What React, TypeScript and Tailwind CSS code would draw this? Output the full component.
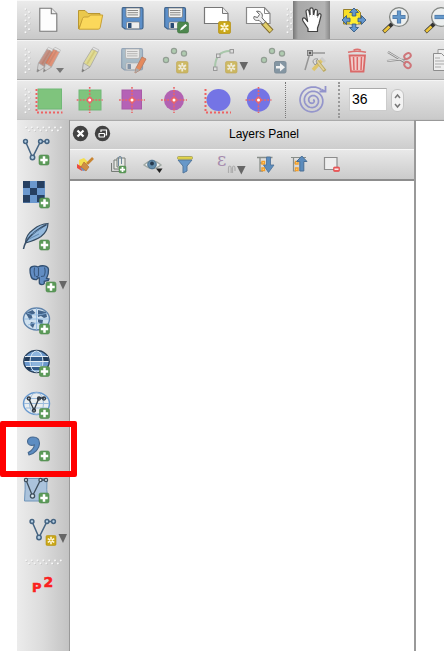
import React from "react";

type TileProps = { x: number; y: number; w: number; h: number; children?: React.ReactNode; className?: string };

/* One icon cell; its drawing uses the coordinates of the toolbar canvas. */
function Tile({ x, y, w, h, children, className = "" }: TileProps) {
  return (
    <svg width={w} height={h} viewBox={`${x} ${y} ${w} ${h}`} className={`block flex-none ${className}`}>
      {children}
    </svg>
  );
}

function Grip({ x, y, w, h, vertical = true }: { x: number; y: number; w: number; h: number; vertical?: boolean }) {
  const n = vertical ? 9 : 13;
  return (
    <Tile x={x} y={y} w={w} h={h}>
      {Array.from({ length: n }, (_, i) => {
        const cx = vertical ? x + (i % 2 ? 12 : 8.5) : x + 9 + i * 2.9;
        const cy = vertical ? y + 8 + i * 2.9 : y + h / 2 + (i % 2 ? 1.5 : -1.5);
        return (
          <g key={i}>
            <circle cx={cx + 0.5} cy={cy + 0.6} r="1" fill="#bdbdbd" />
            <circle cx={cx} cy={cy} r="1" fill="#f8f8f8" />
          </g>
        );
      })}
    </Tile>
  );
}

function Plus({ x, y }: { x: number; y: number }) {
  return (
    <g>
      <rect x={x} y={y} width="10" height="10" rx="1.8" fill="#5b9a58" stroke="#4f874e" strokeWidth=".6" />
      <path d={`M${x + 5} ${y + 1.3}v7.4M${x + 1.3} ${y + 5}h7.4`} stroke="#fff" strokeWidth="2.5" />
    </g>
  );
}

function Star({ x, y, s = 12, o = 1 }: { x: number; y: number; s?: number; o?: number }) {
  return (
    <g opacity={o} transform={`translate(${x} ${y}) scale(${s / 12})`}>
      <rect width="12" height="12" rx="1.6" fill="#c9a718" stroke="#b58f11" strokeWidth=".7" />
      <path d="M6 1.500V10.500M2.100 3.750L9.900 8.250M2.100 8.250L9.900 3.750" stroke="#fff9dd" strokeWidth="1.900" />
      <circle cx="6" cy="6" r="1.100" fill="#d5ae27" />
    </g>
  );
}

function Floppy({ x, faded = false }: { x: number; faded?: boolean }) {
  return (
    <g transform={`translate(${x} ${faded ? 48 : 7})`} opacity={faded ? 0.48 : 1}>
      <path d="M1.5.7h18.5q1.5 0 1.5 1.5v18q0 1.8-1.8 1.8H3.5L.7 19.8V2Q.7.7 1.5.7z" fill={faded ? "#749bb4" : "#5c8fc9"} stroke="#42658c" strokeWidth="1.2" />
      <path d="M4.5 1h14v8q0 1.5-1.5 1.5H6Q4.5 10.500 4.500 9z" fill="#f1f1ef" stroke="#777" strokeWidth=".7" />
      <path d="M6 3.500h10.500M6 5.700h10.500M6 7.900h10.500" stroke="#71706d" strokeWidth=".8" />
      <rect x="5" y="15" width="13" height="6.700" rx="1" fill="#eee" stroke="#777" strokeWidth=".6" />
      <rect x="6.500" y="16" width="3.500" height="5" rx=".5" fill="#294b74" />
    </g>
  );
}

function Pencil({ x, y, color, edge, o = 0.65 }: { x: number; y: number; color: string; edge: string; o?: number }) {
  return (
    <g transform={`translate(${x} ${y})`} opacity={o}>
      <path d="M2.500 16L11 2 17 5 9 20 1 25z" fill={color} stroke="#929292" strokeWidth=".7" />
      <path d="M11 2l1.500-1.800L18 3l-1 2z" fill="#e8e8e8" stroke="#999" strokeWidth=".6" />
      <path d="M6 17l8-13.500" stroke={edge} strokeWidth="1.800" />
      <path d="M2.500 16l6.500 4-8 5z" fill="#d2d2d2" stroke="#888" strokeWidth=".6" />
      <path d="M1.500 22l2 1.300L1 25z" fill="#555" />
    </g>
  );
}

function Down({ x, y }: { x: number; y: number }) {
  return <path d={`M${x} ${y}h8.600l-4.300 8.600z`} fill="#666" />;
}

function Cross({ x, y, r = 13 }: { x: number; y: number; r?: number }) {
  return (
    <g fill="none" stroke="#ea6467" strokeWidth="1.600">
      <path strokeDasharray="1.8 1.3" d={`M${x - r} ${y}h${r * 2}M${x} ${y - r}v${r * 2}`} />
      <circle cx={x} cy={y} r="2.200" fill="#fff" strokeWidth="1.400" />
    </g>
  );
}

const redCorner = { fill: "none", stroke: "#ed6263", strokeWidth: 2, strokeDasharray: "2 2" };

function Nodes({ x }: { x: number }) {
  return (
    <g fill="#afcbb0" stroke="#939e94" strokeWidth="1.2">
      <circle cx={x} cy="60" r="2.600" /><circle cx={x + 8} cy="51" r="2.600" /><circle cx={x + 18} cy="53.500" r="2.600" />
    </g>
  );
}

function VLine({ x, y }: { x: number; y: number }) {
  return (
    <g fill="#b9d1e5" stroke="#456482" strokeWidth="1.500">
      <path fill="none" d={`M${x} ${y}l7 16 8-16h7`} />
      <circle cx={x} cy={y} r="1.900" /><circle cx={x + 7} cy={y + 16} r="2.200" />
      <circle cx={x + 15} cy={y} r="1.900" /><circle cx={x + 21.500} cy={y} r="1.900" />
    </g>
  );
}

function Magnifier({ x, minus = false }: { x: number; minus?: boolean }) {
  return (
    <g>
      <path d={`M${x - 6.500} 23.500l-9 8.500`} stroke="#333" strokeWidth="3.800" />
      <path d={`M${x - 9.500} 26.500l-5.500 5.200`} stroke="#edc53b" strokeWidth="2.700" />
      <circle cx={x} cy="17" r="9.400" fill="#ecefef" stroke="#818481" strokeWidth="1.300" />
      <path d={minus ? `M${x - 6.500} 17h13` : `M${x - 6.500} 17h13M${x} 10.500v13`} stroke="#4b76a5" strokeWidth="4.200" />
      <path d={minus ? `M${x - 5.800} 17h11.600` : `M${x - 5.800} 17h11.600M${x} 11.200v11.600`} stroke="#6499cb" strokeWidth="2.700" />
    </g>
  );
}

/* Archimedean spiral of three turns that ends at the arrow on its upper right. */
const spiralEnd = Math.PI * 1.72;
const spiralPoints = Array.from({ length: 121 }, (_, i) => {
  const t = i / 120;
  const a = spiralEnd - (1 - t) * Math.PI * 6;
  const r = 1 + t * 13;
  return `${(312.5 + r * Math.cos(a)).toFixed(1)},${(100.5 + r * Math.sin(a)).toFixed(1)}`;
}).join(" ");

function TopBar() {
  return (
    <div className="ml-[17px] flex h-10 flex-none overflow-hidden border-b border-t border-b-[#aaa] border-t-[#f8f8f8] bg-gradient-to-b from-[#ebebeb] to-[#c9c9c9]">
      <Grip x={17} y={1} w={16} h={38} />
      <Tile x={33} y={1} w={36} h={38}>
        <path d="M39.800 8.300h11.500l5.500 5.500v17.500h-17z" fill="#fdfdfd" stroke="#777" strokeWidth="1.100" />
        <path d="M51.300 8.300v5.500h5.500" fill="#eee" stroke="#777" strokeWidth="1.100" />
      </Tile>
      <Tile x={69} y={1} w={42} h={38}>
        <path d="M78.500 29V10.500h6.500l3 3h12v4H84z" fill="#eac84c" stroke="#b99731" strokeWidth="1" />
        <path d="M82.500 18.500q.5-1.500 2-1.500h4l2-2h12.200l-2.500 12.500q-.4 1.700-2 1.700H79z" fill="#fbd85b" stroke="#c7a036" strokeWidth="1" />
      </Tile>
      <Tile x={111} y={1} w={42} h={38}><Floppy x={121.500} /></Tile>
      <Tile x={153} y={1} w={42} h={38}>
        <Floppy x={164} />
        <rect x="177.500" y="22" width="11" height="11" rx="1.800" fill="#4d874e" stroke="#3d703e" strokeWidth=".6" />
        <path d="M180 30.500l1-2.500 4.500-4 1.500 1.500-4.500 4z" fill="#fff" />
      </Tile>
      <Tile x={195} y={1} w={42} h={38}>
        <path d="M204.500 7.500h18l5.500 6v10h-23.500z" fill="#fff" stroke="#777" strokeWidth="1.200" />
        <path d="M222.500 7.500v6h5.500" fill="#eee" stroke="#777" /><Star x={218.500} y={21.500} s={12} />
      </Tile>
      <Tile x={237} y={1} w={42} h={38}>
        <path d="M246.500 7.500h18l5.500 6v10h-23.500z" fill="#fff" stroke="#888" strokeWidth="1.200" />
        <path d="M264.500 7.500v6h5.500" fill="none" stroke="#888" />
        <path d="M263 22.500l8.500 9" stroke="#806b2c" strokeWidth="5.500" />
        <path d="M264 23.500l7 7.500" stroke="#e1ce69" strokeWidth="3.500" />
        <path d="M254 16.500l3.500 1 2-3-3-3.200c4-.8 7 2.700 5.500 6.500l3.500 4-2.500 2.500-4-4c-4 .8-6-1.200-5-3.800z" fill="#eee" stroke="#666" />
      </Tile>
      <Grip x={280} y={1} w={14} h={38} />
      <Tile x={293} y={1} w={37} h={38} className="bg-[linear-gradient(to_right,#777,#a8a8a8_14%,#b4b4b4_85%,#888)]">
        <path d="M308 31.500v-3l-5-7.500c-1.400-3 1.200-4.200 2.800-1.800l1.800 2.300-1.600-10c-.2-2.100 2.600-2.400 3-.4l1.200 5.400-.3-7c0-2.200 3-2.300 3.200 0l.4 6.700 1-5.500c.5-1.900 3-1.500 2.900.5l-.3 6.300 1.300-3c1-1.700 3-.6 2.600 1.200l-2 8-1.500 4.300v3.500z" fill="#fff" stroke="#3f3f3f" strokeWidth="1.200" strokeLinejoin="round" />
        <path d="M310.300 15l.3 3.500M313.600 15v3.500M316.800 16l-.2 3" stroke="#fff" strokeWidth="1.500" />
      </Tile>
      <Tile x={330} y={1} w={45} h={38}>
        <path d="M343.500 9.500h14l3 3v11.500h-17z" fill="#f8df27" stroke="#967f2c" />
        <path d="M350 16h8v8h-8z" fill="#ffed32" />
        <g fill="#6396ce" stroke="#395d83" strokeWidth=".9" strokeLinejoin="round">
          <path d="M354 8l4.500 4.500h-2.700V16h-3.600v-3.500h-2.700z" /><path d="M354 32l4.500-4.500h-2.700V24h-3.600v3.500h-2.700z" />
          <path d="M342 20l4.500-4.500v2.700h3.500v3.600h-3.500v2.700z" /><path d="M366 20l-4.500-4.500v2.700H358v3.600h3.500v2.700z" />
        </g>
      </Tile>
      <Tile x={375} y={1} w={42} h={38}><Magnifier x={399} /></Tile>
      <Tile x={417} y={1} w={27} h={38}><Magnifier x={441} minus /></Tile>
    </div>
  );
}

function EditBar() {
  return (
    <div className="ml-[17px] flex h-10 flex-none overflow-hidden border-b border-t border-b-[#aaa] border-t-[#f5f5f5] bg-gradient-to-b from-[#e9e9e9] to-[#cacaca]">
      <Grip x={17} y={41} w={16} h={38} />
      <Tile x={33} y={41} w={36} h={38}>
        <Pencil x={36} y={47} color="#b96b58" edge="#ad583f" /><Pencil x={42.500} y={47} color="#e66c43" edge="#c75c38" />
        <path d="M56 68h8l-4 5z" fill="#777" />
      </Tile>
      <Tile x={69} y={41} w={42} h={38}><Pencil x={81} y={47} color="#e2dc87" edge="#d1c664" o={0.8} /></Tile>
      <Tile x={111} y={41} w={42} h={38}>
        <Floppy x={121} faded />
        <path d="M136 68l6-11 4 2-6 11-5 3z" fill="#e58a5d" stroke="#ba8067" /><path d="M136 68l4 2-5 3z" fill="#aaa" />
      </Tile>
      <Tile x={153} y={41} w={44} h={38}><Nodes x={166} /><Star x={176.500} y={61.500} s={11.500} o={0.6} /></Tile>
      <Tile x={197} y={41} w={56} h={38}>
        <path d="M215 68q0-17 15-17h2" fill="none" stroke="#a9c7ab" strokeWidth="2" />
        <g fill="#ddd" stroke="#999"><rect x="213.500" y="67" width="3.500" height="3.500" /><rect x="216.500" y="54" width="3.500" height="3.500" /><rect x="230" y="49.500" width="3.500" height="3.500" /></g>
        <Star x={225.500} y={61.500} s={11.500} o={0.6} /><Down x={239.500} y={62} />
      </Tile>
      <Tile x={253} y={41} w={43} h={38}>
        <Nodes x={264} /><rect x="274.500" y="61.500" width="11.500" height="11.500" rx="1.500" fill="#8496a3" stroke="#7f8e99" />
        <path d="M276 66h4v-3l5 4.300-5 4.300v-3h-4z" fill="#f2f2f2" />
      </Tile>
      <Tile x={296} y={41} w={37} h={38}>
        <path d="M305 70l5-17h15" fill="none" stroke="#969696" strokeWidth="1.500" />
        <rect x="307.500" y="50.500" width="5" height="5" fill="#bbb" stroke="#818181" /><circle cx="310" cy="53" r="1.200" fill="#555" />
        <path d="M322 60l-9 10" stroke="#dec56c" strokeWidth="3.500" /><path d="M317 61l8 10" stroke="#baa85c" strokeWidth="3.500" />
        <path d="M317 61l7 9" stroke="#dfd09b" strokeWidth="2" /><path d="M313 62q0-4 5-3l-2 2 1 2-2 2z" fill="#ddd" stroke="#999" /><path d="M321 58l4 4" stroke="#ccc" strokeWidth="3" />
      </Tile>
      <Tile x={333} y={41} w={42} h={38}>
        <path d="M349.500 55.500h15.500l-1.500 16h-12.500z" fill="#f1cecc" stroke="#da6968" strokeWidth="1.800" />
        <path d="M353.500 57l.5 13M357.300 57v13M361.500 57l-.5 13" stroke="#d66" strokeWidth="1.500" />
        <path d="M348 52.300q9-2.300 18 0M353.500 50.200q3.700-2 7.400 0" stroke="#dc7270" strokeWidth="1.500" fill="none" />
      </Tile>
      <Tile x={375} y={41} w={49} h={38}>
        <path d="M388 52l18 11M387 61l19-2" stroke="#888" strokeWidth="2.200" /><path d="M388 52l17 10M387 61l18-2.500" stroke="#e5e5e5" strokeWidth=".9" />
        <g fill="none" stroke="#cf7579" strokeWidth="1.900"><ellipse cx="407.500" cy="56" rx="3.500" ry="2.500" transform="rotate(-30 407.500 56)" /><ellipse cx="407.500" cy="65" rx="3.500" ry="2.700" transform="rotate(38 407.500 65)" /></g>
      </Tile>
      <Tile x={424} y={41} w={20} h={38}>
        <path d="M438 53v-3.500h12V67" fill="#eee" stroke="#999" /><path d="M433.500 53.500h8l5 5v12h-13z" fill="#eee" stroke="#8d8d8d" />
        <path d="M435 58h5M435 61h10M435 64h10M435 67h6" stroke="#aaa" />
      </Tile>
    </div>
  );
}

function ShapeBar() {
  return (
    <div className="ml-[17px] flex h-10 flex-none border-b border-t border-b-[#c4c4c4] border-t-[#f5f5f5] bg-gradient-to-b from-[#eaeaea] to-[#cacaca]">
      <Grip x={17} y={81} w={16} h={38} />
      <Tile x={33} y={81} w={36} h={38}><rect x="38" y="89" width="23.500" height="20" fill="#7fc47d" stroke="#71b877" /><path d="M36.500 89v23.500h26" {...redCorner} /></Tile>
      <Tile x={69} y={81} w={42} h={38}><rect x="79" y="90" width="22" height="20" fill="#7fc47d" stroke="#71b877" /><Cross x={89.700} y={100} /></Tile>
      <Tile x={111} y={81} w={42} h={38}><rect x="122" y="90" width="19.500" height="19" fill="#b562b6" stroke="#a85aa8" /><Cross x={132} y={100} /></Tile>
      <Tile x={153} y={81} w={44} h={38}><ellipse cx="174" cy="100" rx="10" ry="10.300" fill="#b262b2" /><Cross x={174} y={100} /></Tile>
      <Tile x={197} y={81} w={43} h={38}><ellipse cx="218.500" cy="100" rx="12" ry="11" fill="#7474e5" /><path d="M205.500 89v23.500H231" {...redCorner} /></Tile>
      <Tile x={240} y={81} w={45} h={38}><circle cx="258.500" cy="100" r="11.700" fill="#7474e5" /><Cross x={258.500} y={100} /></Tile>
      <div className="mt-px h-9 border-l border-dotted border-[#777]" />
      <Tile x={286} y={81} w={51} h={38}>
        <polyline points={spiralPoints} fill="none" stroke="#9495cb" strokeWidth="1.700" />
        <path d="M319.500 91.500h6v-5.500M321.500 89.500l4 2" fill="none" stroke="#9293cb" strokeWidth="1.800" />
      </Tile>
      <div className="mt-px mr-[9px] ml-px h-9 border-l-2 border-dotted border-[#999]" />
      <div className="mt-[7px] flex h-[23px] w-[38px] items-center border border-[#ccc] border-t-[#aaa] bg-white pl-0.5 font-['Liberation_Sans',sans-serif] text-[14px] text-black">36</div>
      <div className="mt-2 ml-1 h-[23px] w-[13px] rounded-[6px] border border-[#c4c4c4] bg-[#f3f3f3]">
        <Tile x={391} y={89} w={11} h={21}><path d="M394 97l2.500-3 2.500 3M394 103l2.500 3 2.500-3" fill="none" stroke="#777" strokeWidth="1.500" /></Tile>
      </div>
    </div>
  );
}

function SideBar() {
  const tile = { x: 17, w: 52 };
  return (
    <aside className="flex w-[53px] flex-none flex-col border-r border-[#999] bg-gradient-to-r from-[#ececec] via-[#dbdbdb] to-[#c3c3c3]">
      <Grip x={17} y={120} w={52} h={18} vertical={false} />
      <Tile {...tile} y={138} h={36}><VLine x={25.500} y={141.500} /><Plus x={39} y={155} /></Tile>
      <Tile {...tile} y={174} h={42}>
        <rect x="23" y="181" width="22" height="22" fill="#6b98ce" /><path d="M23 181h7v7h-7zM37 181h7.500v7H37zM30 188h7v7h-7zM23 195h7v7.500h-7zM37 195h7.500v7H37z" fill="#263f61" /><Plus x={39.500} y={198} />
      </Tile>
      <Tile {...tile} y={216} h={42}>
        <path d="M25.500 243q0-8 8.500-14 6-5 14-5.500-.2 8-7 13-5 3.500-15.500 6.500z" fill="#94b9dd" stroke="#354b61" strokeWidth="1.200" />
        <path d="M23.500 249q2-13 23-24.500" fill="none" stroke="#384f68" strokeWidth="1.500" /><path d="M29 239l10-5M32 234l10-6" stroke="#6289b1" fill="none" /><Plus x={39.500} y={240} />
      </Tile>
      <Tile {...tile} y={258} h={43}>
        <path d="M30 269.500c0-3.500 5-4.200 8-2.500 3.500-2 10-1.800 10.500 2.500.3 4-1 7-2 9l2.500.5-.7 1.500-4 .8v1.700c0 2.200-5 2.200-5-.5V278h-1.500l-1 1.500c-4 .5-5.500-1.500-6-4-.8-2-.8-4-.8-6z" fill="#628dc3" stroke="#314f71" strokeWidth="1.300" />
        <path d="M34.500 267.500q-1 5 .5 9M38.500 268v7.500q-1 1.500-2.500 1M44.500 267.500q1.500 5-.5 8.500l-3 .5" fill="none" stroke="#38587e" strokeWidth="1.100" />
        <Plus x={46} y={282} /><path d="M59 281h8l-4 8.500z" fill="#666" />
      </Tile>
      <Tile {...tile} y={301} h={42}>
        <ellipse cx="36.500" cy="319" rx="13" ry="11" fill="#d0e1ef" stroke="#6285ac" strokeWidth="1.400" />
        <path d="M25.500 313l7-3 3 3-4 2 1 3-3 2-2-4zM31 322l4 1-2 5-3-3zM38 310l8 2 1 5-3 1-3-2-3 1zM38 319l5 1-1 6-4-4z" fill="#44658b" />
        <path d="M24 319h25M36.500 308v22M27 313q9 4 20 0M28 325q9-4 18 0" fill="none" stroke="#8eb7df" strokeWidth=".8" /><Plus x={39.500} y={324} />
      </Tile>
      <Tile {...tile} y={343} h={42}>
        <ellipse cx="36.500" cy="361.500" rx="12.700" ry="11" fill="#6b98cd" />
        <path d="M26 356h21l2 5H24zM25 366h23l-3 4H28z" fill="#203a58" />
        <path d="M31.500 351h10v21h-10z" fill="#8db4dd" /><path d="M30 356.500h13v5H30zM30.500 366.500h12v3.500h-12z" fill="#345b89" />
        <ellipse cx="36.500" cy="361.500" rx="12.700" ry="11" fill="none" stroke="#29415d" strokeWidth="1.400" />
        <ellipse cx="36.500" cy="361.500" rx="6.500" ry="10.500" fill="none" stroke="#d5e6f3" /><path d="M25 356.500h23M24.500 361.500h24M26 366.500h21" stroke="#e4edf4" strokeWidth="1" /><Plus x={39.500} y={366.500} />
      </Tile>
      <Tile {...tile} y={385} h={42}>
        <ellipse cx="36.500" cy="403.500" rx="13" ry="11" fill="#e9edef" stroke="#699ad0" strokeWidth="1.500" />
        <ellipse cx="36.500" cy="403.500" rx="7" ry="11" fill="none" stroke="#9bbbdc" /><path d="M24 403.500h25M26 408h21M26 398.500h21" stroke="#9bbbdc" />
        <g fill="none" stroke="#303942" strokeWidth="1.300"><path d="M29 399l5 11 5-12h5" /><circle cx="28.800" cy="398.500" r="1.500" /><circle cx="34" cy="410.500" r="1.500" /><circle cx="39" cy="398.500" r="1.500" /><circle cx="44" cy="398.500" r="1.500" /></g><Plus x={39.500} y={408.500} />
      </Tile>
      <Tile {...tile} y={427} h={42}><path d="M29 455c6-1.500 10.500-6.500 10.500-11.500 0-4.200-2.700-6.500-6.500-6.500-3.500 0-5.700 2-5.500 4.800.2 3 3.500 4.500 7 2.900-.5 3.500-2.700 6-6.300 7.900z" fill="#5d8dc2" stroke="#45688f" strokeWidth="1.100" strokeLinejoin="round" /><Plus x={39.500} y={451} /></Tile>
      <Tile {...tile} y={469} h={42}>
        <path d="M25 478.500h22q-1 11 1 22.500H24.500q1-12 .5-22.500z" fill="#abc3dc" stroke="#6e94b9" />
        <g fill="#dae8f1" stroke="#3f4f5c" strokeWidth="1.300"><path d="M26 480l6.500 16 8-16h6" fill="none" /><circle cx="26" cy="480" r="1.600" /><circle cx="32.500" cy="496" r="2.100" /><circle cx="40.500" cy="480" r="1.600" /><circle cx="46" cy="480" r="1.600" /></g><Plus x={39} y={493} />
      </Tile>
      <Tile {...tile} y={511} h={42}><VLine x={32} y={521.500} /><Star x={46} y={535.500} s={10} /><path d="M58.500 534h8.500l-4 9z" fill="#666" /></Tile>
      <Grip x={17} y={553} w={52} h={18} vertical={false} />
      <div className="ml-[15px] flex h-7 w-6 flex-none font-['DejaVu_Sans',sans-serif] font-bold leading-none text-[#fb2020] [-webkit-text-stroke:0.5px_#fb2020]">
        <span className="pt-[10px] text-[13px]">P</span><span className="pt-1 pl-[2px] text-[14px]">2</span>
      </div>
    </aside>
  );
}

function LayersPanel() {
  return (
    <section className="flex w-[344px] flex-none flex-col">
      <header className="flex h-[29px] flex-none border-t border-[#aaa] bg-gradient-to-b from-[#e8e8e8] to-[#cdcdcd]">
        <Tile x={70} y={120} w={44} h={27}>
          <circle cx="80.500" cy="132.500" r="7.700" fill="#424242" /><circle cx="102.500" cy="132.500" r="7.700" fill="#424242" />
          <path d="M77.500 129.500l6 6M83.500 129.500l-6 6" stroke="#fff" strokeWidth="2.200" />
          <rect x="99" y="132.500" width="5.500" height="3.500" rx=".5" fill="none" stroke="#fff" strokeWidth="1.200" /><path d="M101 131v-2h5.500v5h-1" fill="none" stroke="#fff" strokeWidth="1.200" />
        </Tile>
        <h1 className="flex flex-1 items-center justify-end pr-[115px] pb-0.5 font-['Liberation_Sans',sans-serif] text-[12px] leading-none text-black">Layers Panel</h1>
      </header>
      <div className="flex h-8 flex-none border-b-2 border-t border-b-[#8d8d8d] border-t-[#f8f8f8] bg-gradient-to-b from-[#e9e9e9] to-[#cbcbcb]">
        <Tile x={70} y={150} w={35} h={29}>
          <path d="M79 160l5-2 4 4-3 6-6-2z" fill="#f4df50" /><path d="M77 164l7 4-2 3-5-3z" fill="#ea4c3f" /><path d="M80 168l4-2 3 4-4 1z" fill="#6b93cd" />
          <path d="M84 162l5 5-3 4-5-4z" fill="#cf8d44" stroke="#b47338" strokeWidth=".7" /><path d="M87 164l6-6" stroke="#c98532" strokeWidth="2.600" />
        </Tile>
        <Tile x={105} y={150} w={32} h={29}>
          <g fill="#e7e9e4" stroke="#767c77"><path d="M111.500 163v8.500h9" fill="none" /><path d="M114 160h7v9h-7z" /><path d="M117 158h8v9h-8z" /></g>
          <path d="M118.500 166v-8q0-1.500 1.500-1.500t1.500 1.500v6" fill="none" stroke="#71899d" /><g transform="translate(119 166) scale(.7)"><Plus x={0} y={0} /></g>
        </Tile>
        <Tile x={137} y={150} w={34} h={29}>
          <path d="M144 165q8-8 17 0-8 7-17 0z" fill="#f0f1ef" stroke="#a1a9a4" strokeWidth="1.500" /><circle cx="152" cy="164.500" r="4.300" fill="#658eab" stroke="#4b7190" /><circle cx="152" cy="163.500" r="1.900" fill="#25384c" />
          <path d="M156 168.500h6.500l-3 4.500z" fill="#222" />
        </Tile>
        <Tile x={171} y={150} w={37} h={29}>
          <path d="M178 160l5 6v7l4-2v-5l5-6z" fill="#6798c9" stroke="#53779b" /><rect x="177.500" y="156.500" width="15" height="2.800" rx="1" fill="#e2d449" stroke="#9e9b5a" strokeWidth=".8" />
        </Tile>
        <div className="flex w-[42px] flex-none pl-[9px]">
          <span className="w-[9px] pt-[1px] font-['DejaVu_Serif',serif] text-[18px] leading-[18px] text-[#a68bad]">ε</span>
          <Tile x={225} y={150} w={22} h={29}><path d="M227.500 173v-5q0-2 1.300-2t1.300 2v5M231.500 173v-5q0-2 1.200-2t1.300 2v3" fill="none" stroke="#adadad" strokeWidth="1.200" /><Down x={236} y={166} /></Tile>
        </div>
        <Tile x={250} y={150} w={36} h={29}>
          <path d="M257 157.500h15.500M260 158v13h3M260 163h3" fill="none" stroke="#898e8a" strokeWidth="1.300" />
          <path d="M262 161.500h2.500v2.500H262zM262 168h2.500v2.500H262z" fill="#fbe3a6" stroke="#f5a02a" strokeWidth="1.400" />
          <path d="M266.500 157h4v8h3.500l-5.500 7.500-5-7.500h3z" fill="#5c8cbd" stroke="#4b6f95" strokeWidth=".8" />
        </Tile>
        <Tile x={286} y={150} w={33} h={29}>
          <path d="M291 157.500h15M293.500 158v13h2.500M294 163h3" fill="none" stroke="#898e8a" strokeWidth="1.200" />
          <path d="M295.500 161.500h2.500v2.500h-2.500zM295.500 168h2.500v2.500h-2.500z" fill="#fbe3a6" stroke="#f5a02a" strokeWidth="1.400" />
          <path d="M301.800 156l5.200 5.500h-3.200v9.500h-4v-9.500h-3.200z" fill="#5c8cbd" stroke="#4b6f95" />
        </Tile>
        <Tile x={319} y={150} w={35} h={29}>
          <path d="M324.500 157.500h12.500v12h-12.500z" fill="#eee" stroke="#8d8d8d" strokeWidth="1.200" /><rect x="333.500" y="167" width="6" height="4.500" rx="1" fill="#eb5959" stroke="#e34e50" strokeWidth=".7" /><path d="M334.500 169.200h4" stroke="#fff" strokeWidth="1.300" />
        </Tile>
      </div>
      <div className="flex-1 bg-white" />
    </section>
  );
}

export default function App() {
  return (
    <main className="relative flex h-[651px] w-[444px] flex-col overflow-hidden bg-white">
      <TopBar />
      <EditBar />
      <ShapeBar />
      <div className="ml-[17px] flex min-h-0 flex-1">
        <SideBar />
        <LayersPanel />
        <div className="flex-1 border-l-2 border-t border-[#999] bg-white" />
      </div>
      <div className="absolute top-[421px] left-0 h-[56px] w-[77px] rounded-[2px] border-[6px] border-[#ff0000]" />
    </main>
  );
}
